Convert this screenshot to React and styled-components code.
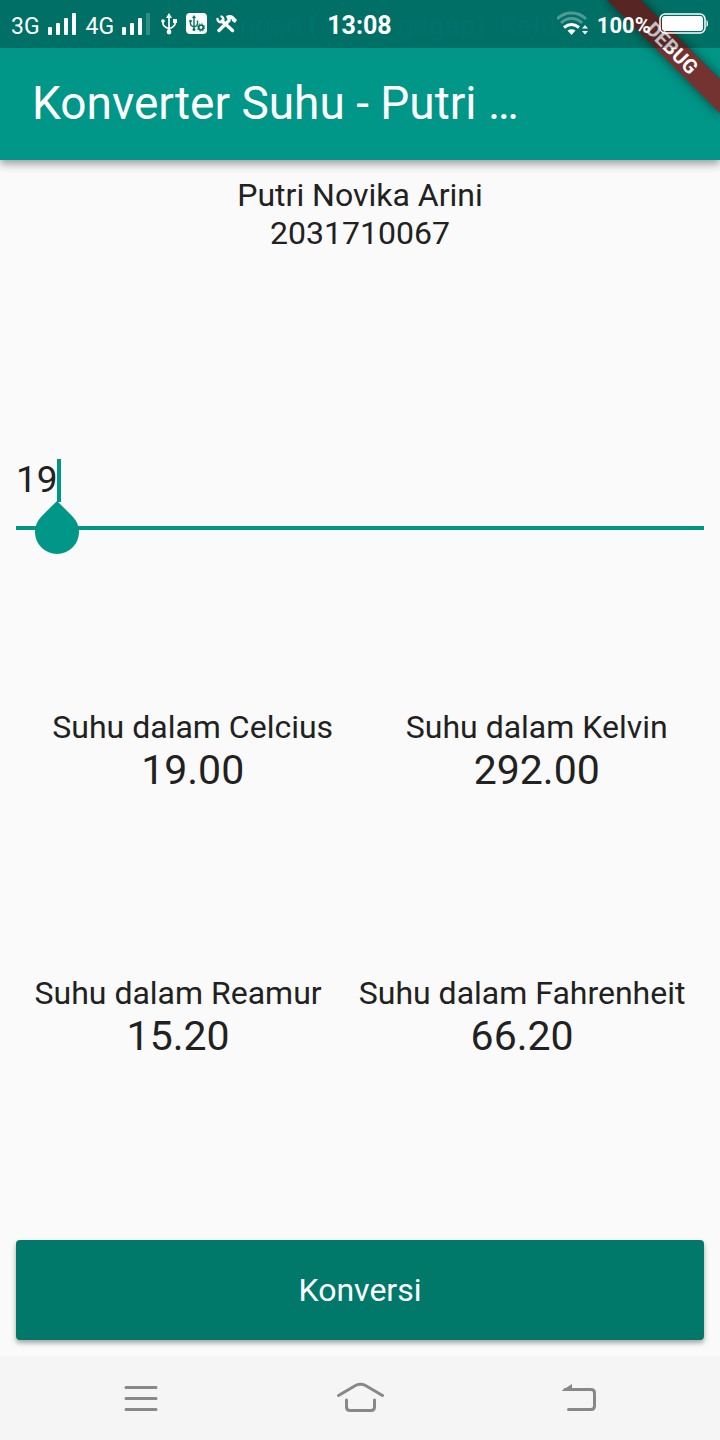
import React, { useState } from "react";
import styled, { createGlobalStyle } from "styled-components";

const GlobalStyle = createGlobalStyle`
  *, *::before, *::after { box-sizing: border-box; }
  body {
    margin: 0;
    background: #fafafa;
    color: #212121;
    font-family: Roboto, "Liberation Sans", sans-serif;
  }
`;

const Screen = styled.div`
  position: relative;
  display: flex;
  flex-direction: column;
  min-height: 100vh;
  overflow: hidden;
`;

const StatusBar = styled.div`
  position: absolute;
  inset: 0 0 auto 0;
  z-index: 3;
  display: grid;
  grid-template-columns: 1fr auto 1fr;
  align-items: center;
  height: 48px;
  padding: 0 12px 0 11px;
  background: rgba(0, 0, 0, 0.25);
  color: #fff;
`;

const StatusGroup = styled.div`
  display: flex;
  align-items: center;
  justify-content: ${(p) => (p.$end ? "flex-end" : "flex-start")};
  gap: 8px;
`;

const StatusText = styled.span`
  padding-top: ${(p) => (p.$light ? 6 : 4)}px;
  font-size: ${(p) => p.$size}px;
  font-weight: ${(p) => (p.$light ? 400 : 700)};
  line-height: 28px;
`;

const Ticker = styled.div`
  position: absolute;
  inset: 0 160px auto 240px;
  display: flex;
  gap: 80px;
  overflow: hidden;
  color: #007575;
  font-size: 28px;
  line-height: 52px;
  white-space: nowrap;
  opacity: 0.4;
`;

const AppBar = styled.header`
  position: relative;
  z-index: 1;
  padding: 48px 32px 0;
  background: #009688;
  box-shadow: 0 4px 8px rgba(0, 0, 0, 0.3), 0 2px 12px rgba(0, 0, 0, 0.12);
`;

const Title = styled.h1`
  width: 75%;
  margin: 0;
  overflow: hidden;
  color: #fff;
  font-size: 46px;
  font-weight: 400;
  line-height: 110px;
  padding-bottom: 2px;
  white-space: nowrap;
`;

const RibbonCorner = styled.div`
  position: absolute;
  top: 0;
  right: 0;
  z-index: 2;
  width: 160px;
  height: 160px;
  overflow: hidden;
  pointer-events: none;
`;

const Ribbon = styled.div`
  position: absolute;
  top: 56px;
  left: 80px;
  width: 160px;
  height: 24px;
  transform: rotate(45deg);
  transform-origin: 80px -56px;
  background:
    linear-gradient(rgba(183, 28, 28, 0.63), rgba(183, 28, 28, 0.63)),
    rgba(0, 0, 0, 0.4);
  box-shadow: 0 0 12px rgba(0, 0, 0, 0.5);
  color: #fff;
  font-size: 20px;
  font-weight: 700;
  line-height: 24px;
  text-align: center;
`;

const Content = styled.form`
  flex: 1;
  display: flex;
  flex-direction: column;
  justify-content: space-between;
  padding: 16px;
`;

const Identity = styled.div`
  font-size: 32px;
  line-height: 38px;
  text-align: center;
`;

const Line = styled.p`
  margin: 0;
`;

const Field = styled.div`
  position: relative;
  padding-top: 25px;
  border-bottom: 4px solid #009688;
  font-size: 37px;
`;

const Input = styled.input`
  display: block;
  width: 100%;
  height: 48px;
  margin-bottom: 23px;
  padding: 0;
  border: 0;
  outline: 0;
  background: transparent;
  caret-color: transparent;
  color: inherit;
  font: inherit;
`;

const Caret = styled.span`
  position: absolute;
  top: 29px;
  width: 4px;
  height: 43px;
  margin-left: -1px;
  background: #009688;
`;

const Handle = styled.span`
  position: absolute;
  top: 51px;
  right: 50%;
  width: 44px;
  height: 44px;
  margin-right: -20px;
  border-radius: 0 50% 50% 50%;
  background: #009688;
  transform: rotate(45deg);
`;

const ResultRow = styled.div`
  display: flex;
  justify-content: space-around;
`;

const Result = styled.div`
  padding-bottom: 2px;
  font-size: 32px;
  line-height: 38px;
  text-align: center;
`;

const Value = styled.output`
  display: block;
  font-size: 41px;
  line-height: 48px;
`;

const Convert = styled.button`
  height: 100px;
  border: 0;
  border-radius: 4px;
  background: #00796b;
  box-shadow: 0 3px 5px rgba(0, 0, 0, 0.35);
  color: #fff;
  font: inherit;
  font-size: 32px;
`;

const NavBar = styled.nav`
  display: flex;
  justify-content: space-around;
  align-items: center;
  height: 84px;
  padding: 0 36px;
  background: #f5f5f5;
`;

const NavButton = styled.button`
  display: flex;
  padding: 0;
  border: 0;
  background: none;
`;

const Signal = ({ weak }) => (
  <svg width="30" height="24" viewBox="0 0 30 24" fill="#fff" aria-hidden="true">
    <rect x="0" y="15" width="4" height="8" rx="1" />
    <rect x="8" y="11" width="4" height="12" rx="1" />
    <rect x="16" y="6" width="4" height="17" rx="1" />
    <rect x="24" y="1" width="4" height="22" rx="1" opacity={weak ? 0.2 : 1} />
  </svg>
);

const Usb = () => (
  <svg width="18" height="22" viewBox="-1 0 18 22" fill="none" stroke="#fff" strokeWidth="1.700" aria-hidden="true">
    <path d="M8 3v16M2 8v3c0 2 2 3 6 5M14 7v4c0 2-2 3-6 5" />
    <path d="M8 0l3 5H5z" fill="#fff" stroke="none" />
    <circle cx="8" cy="19" r="2.400" fill="#fff" stroke="none" />
    <circle cx="2" cy="8" r="1.800" fill="#fff" stroke="none" />
    <path d="M12 6h4v4h-4z" fill="#fff" stroke="none" />
  </svg>
);

const UsbDebug = () => (
  <svg width="22" height="22" viewBox="0 0 22 22" aria-hidden="true">
    <rect width="21" height="21" rx="4" fill="#fff" />
    <g fill="none" stroke="#047164" strokeWidth="1.400">
      <path d="M8 4v13M4.500 8v3c0 1 1 2 3.500 3M11.500 7.500v3.500c0 1-1 2-3.500 3" />
      <circle cx="15" cy="14.500" r="2.300" strokeWidth="1.800" />
      <circle cx="15" cy="14.500" r="3.700" strokeWidth="1" strokeDasharray="1.500 1.400" />
    </g>
    <path d="M8 2l2 3H6z" fill="#047164" />
    <circle cx="8" cy="16.500" r="1.500" fill="#047164" />
    <circle cx="4.500" cy="8" r="1.300" fill="#047164" />
  </svg>
);

const Tools = () => (
  <svg width="22" height="20" viewBox="1 0 22 20" aria-hidden="true">
    <g fill="none" stroke="#fff" strokeWidth="3.400" strokeLinecap="round">
      <path d="M7 7l10.500 9.500" />
      <path d="M4 16.500L14 6.500" />
      <path d="M2.500 5c0 2.500 2.500 4 4.500 3S9 3.500 6.500 2.500" strokeWidth="2.400" />
    </g>
    <path d="M11 2c4-2 7-1 9 2l2 2-2 3-3-2-.500-2-3 1.500-1.500-2z" fill="#fff" />
  </svg>
);

const Wifi = () => (
  <svg width="32" height="26" viewBox="2 1 32 26" fill="none" stroke="#fff" strokeWidth="3" aria-hidden="true">
    <path d="M2 9c8-8 21-8 29 0" opacity="0.300" />
    <path d="M6 13c6-6 15-6 21 0" opacity="0.300" />
    <path d="M9 17.500c5-4 10-4 15 0" />
    <path d="M12.500 20.500c2.500-1.700 5.500-1.700 8 0L16.500 25z" fill="#fff" stroke="none" />
    <path d="M27 18.500l3-3.500 3 3.500zM27 21l3 3.500 3-3.500z" fill="#fff" stroke="none" />
  </svg>
);

const Battery = () => (
  <svg width="49" height="22" viewBox="0 0 49 22" aria-hidden="true">
    <rect x="1" y="1" width="45" height="19" rx="5" fill="none" stroke="#fff" strokeWidth="1.500" />
    <rect x="3" y="3" width="41" height="15" rx="3" fill="#fff" />
    <path d="M47.500 7c2 1 2 6 0 7z" fill="#fff" />
  </svg>
);

const MenuIcon = () => (
  <svg width="36" height="28" viewBox="0 0 36 28" stroke="#888" strokeWidth="3" strokeLinecap="round" aria-hidden="true">
    <path d="M2 3.500h30M2 14.500h30M2 25.500h30" />
  </svg>
);

const HomeIcon = () => (
  <svg width="48" height="32" viewBox="0 0 48 32" fill="none" stroke="#888" strokeWidth="3" strokeLinecap="round" aria-hidden="true">
    <path d="M2.500 13.500L19.500 3.500q5-2.500 10 0l17 10" />
    <path d="M10.500 18v7q0 3.500 3.500 3.500h21q3.500 0 3.500-3.500v-7" />
  </svg>
);

const BackIcon = () => (
  <svg width="36" height="30" viewBox="0 0 36 30" fill="none" stroke="#888" strokeWidth="3" strokeLinecap="round" aria-hidden="true">
    <path d="M5 6.500h26q3.500 0 3.500 3.500v13q0 3.500-3.500 3.500H8.500" />
    <path d="M2 7.500L12 1v7H2z" fill="#888" stroke="none" />
  </svg>
);

const convert = (c) => [
  [
    ["Suhu dalam Celcius", c],
    ["Suhu dalam Kelvin", c + 273],
  ],
  [
    ["Suhu dalam Reamur", c * 0.8],
    ["Suhu dalam Fahrenheit", c * 1.8 + 32],
  ],
];

export default function App() {
  const [text, setText] = useState("19");
  const [celsius, setCelsius] = useState(19);

  const submit = (event) => {
    event.preventDefault();
    setCelsius(Number(text) || 0);
  };

  return (
    <>
      <GlobalStyle />
      <Screen>
        <StatusBar>
          <Ticker aria-hidden="true">
            <span>ngan (</span>
            <span>gagap). Ketu</span>
          </Ticker>
          <StatusGroup>
            <StatusText $size={23} $light>3G</StatusText>
            <Signal />
            <StatusText $size={23} $light>4G</StatusText>
            <Signal weak />
            <Usb />
            <UsbDebug />
            <Tools />
          </StatusGroup>
          <StatusText $size={25}>13:08</StatusText>
          <StatusGroup $end>
            <Wifi />
            <StatusText $size={22}>100%</StatusText>
            <Battery />
          </StatusGroup>
        </StatusBar>
        <AppBar>
          <Title>Konverter Suhu - Putri …</Title>
        </AppBar>
        <RibbonCorner>
          <Ribbon>DEBUG</Ribbon>
        </RibbonCorner>
        <Content onSubmit={submit}>
          <Identity>
            <Line>Putri Novika Arini</Line>
            <Line>2031710067</Line>
          </Identity>
          <Field>
            <Input
              aria-label="Suhu"
              inputMode="decimal"
              value={text}
              onChange={(event) => setText(event.target.value)}
            />
            <Caret style={{ left: `${text.length}ch` }}>
              <Handle />
            </Caret>
          </Field>
          {convert(celsius).map((row, index) => (
            <ResultRow key={index}>
              {row.map(([label, value]) => (
                <Result key={label}>
                  <Line>{label}</Line>
                  <Value aria-label={label}>{value.toFixed(2)}</Value>
                </Result>
              ))}
            </ResultRow>
          ))}
          <Convert type="submit">Konversi</Convert>
        </Content>
        <NavBar>
          <NavButton type="button" aria-label="Menu"><MenuIcon /></NavButton>
          <NavButton type="button" aria-label="Home"><HomeIcon /></NavButton>
          <NavButton type="button" aria-label="Back"><BackIcon /></NavButton>
        </NavBar>
      </Screen>
    </>
  );
}
